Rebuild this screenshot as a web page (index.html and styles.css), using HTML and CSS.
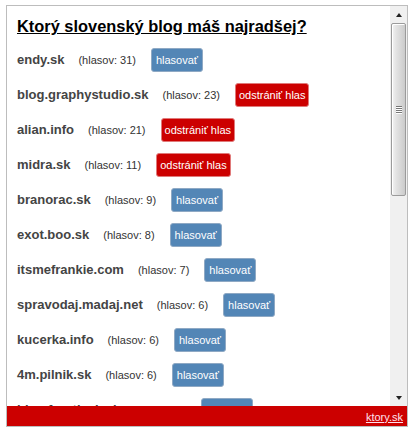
FILE: index.html
```html
<!DOCTYPE html>
<html lang="sk">
<head>
<meta charset="utf-8">
<title>Ktorý slovenský blog máš najradšej?</title>
<link rel="stylesheet" href="styles.css">
</head>
<body>
<div class="widget">
  <div class="main">
    <div class="content">
      <h1 class="title">Ktorý slovenský blog máš najradšej?</h1>
      <div class="row"><span class="name">endy.sk</span><span class="count">(hlasov: 31)</span><button class="btn vote">hlasovať</button></div>
      <div class="row"><span class="name">blog.graphystudio.sk</span><span class="count">(hlasov: 23)</span><button class="btn remove">odstrániť hlas</button></div>
      <div class="row"><span class="name">alian.info</span><span class="count">(hlasov: 21)</span><button class="btn remove">odstrániť hlas</button></div>
      <div class="row"><span class="name">midra.sk</span><span class="count">(hlasov: 11)</span><button class="btn remove">odstrániť hlas</button></div>
      <div class="row"><span class="name">branorac.sk</span><span class="count">(hlasov: 9)</span><button class="btn vote">hlasovať</button></div>
      <div class="row"><span class="name">exot.boo.sk</span><span class="count">(hlasov: 8)</span><button class="btn vote">hlasovať</button></div>
      <div class="row"><span class="name">itsmefrankie.com</span><span class="count">(hlasov: 7)</span><button class="btn vote">hlasovať</button></div>
      <div class="row"><span class="name">spravodaj.madaj.net</span><span class="count">(hlasov: 6)</span><button class="btn vote">hlasovať</button></div>
      <div class="row"><span class="name">kucerka.info</span><span class="count">(hlasov: 6)</span><button class="btn vote">hlasovať</button></div>
      <div class="row"><span class="name">4m.pilnik.sk</span><span class="count">(hlasov: 6)</span><button class="btn vote">hlasovať</button></div>
      <div class="row"><span class="name">blog.frantisek.sk</span><span class="count">(hlasov: 5)</span><button class="btn vote">hlasovať</button></div>
    </div>
    <div class="scrollbar">
      <div class="sb-btn"><span class="arrow-up"></span></div>
      <div class="sb-track">
        <div class="sb-thumb"><span class="grip"></span><span class="grip"></span><span class="grip"></span><span class="grip"></span></div>
      </div>
      <div class="sb-btn"><span class="arrow-down"></span></div>
    </div>
  </div>
  <div class="footer"><a class="footer-link" href="#">ktory.sk</a></div>
</div>
</body>
</html>
```
FILE: styles.css
```css
html, body {
  margin: 0;
  padding: 0;
  background: #fff;
}

body {
  font-family: "Liberation Sans", Arial, sans-serif;
}

.widget {
  margin: 5px 0 0 6px;
  width: 400px;
  border: 1px solid #bdbdbd;
}

.main {
  display: flex;
  height: 400px;
}

.content {
  flex: 1;
  overflow: hidden;
  padding: 10px 10px 0 10px;
}

.title {
  margin: 0 0 6px 0;
  font-size: 16.4px;
  line-height: 20px;
  font-weight: bold;
  color: #000;
  text-decoration: underline;
  white-space: nowrap;
}

.row {
  display: flex;
  align-items: center;
  height: 35px;
  white-space: nowrap;
}

.name {
  font-size: 13px;
  font-weight: bold;
  color: #444;
}

.count {
  margin-left: 14px;
  font-size: 11px;
  color: #333;
}

.btn {
  margin-left: 15px;
  height: 24px;
  padding: 0 4px;
  border-radius: 3px;
  font-family: "Liberation Sans", Arial, sans-serif;
  font-size: 11px;
  line-height: 22px;
  color: #fff;
  cursor: pointer;
}

.vote {
  background: #5386b6;
  border: 1px solid #8fa9c4;
}

.remove {
  padding: 0 3px;
  background: #cc0000;
  border: 1px solid #e07a7a;
}

.scrollbar {
  width: 17px;
  display: flex;
  flex-direction: column;
  background: #f0f0f0;
}

.sb-btn {
  height: 17px;
  display: flex;
  align-items: center;
  justify-content: center;
  flex: none;
}

.arrow-up {
  width: 0;
  height: 0;
  border-left: 3.5px solid transparent;
  border-right: 3.5px solid transparent;
  border-bottom: 4px solid #222;
}

.arrow-down {
  width: 0;
  height: 0;
  border-left: 3.5px solid transparent;
  border-right: 3.5px solid transparent;
  border-top: 4px solid #222;
}

.sb-track {
  flex: 1;
  padding: 0 1px;
}

.sb-thumb {
  height: 171px;
  border: 1px solid #9b9b9b;
  border-radius: 2px;
  background: linear-gradient(to right, #f4f4f4 0%, #e4e4e4 30%, #d6d6d6 70%, #cbcbcb 100%);
  box-shadow: inset 1px 1px 0 #fff;
  display: flex;
  flex-direction: column;
  align-items: center;
  justify-content: center;
  gap: 1px;
}

.grip {
  display: block;
  width: 6px;
  height: 1px;
  background: #777;
  box-shadow: 0 1px 0 #fff;
}

.footer {
  height: 20px;
  background: #cc0000;
  text-align: right;
  padding-right: 4px;
  line-height: 20px;
}

.footer-link {
  font-size: 11px;
  color: #ffe0ec;
  text-decoration: underline;
}
```
